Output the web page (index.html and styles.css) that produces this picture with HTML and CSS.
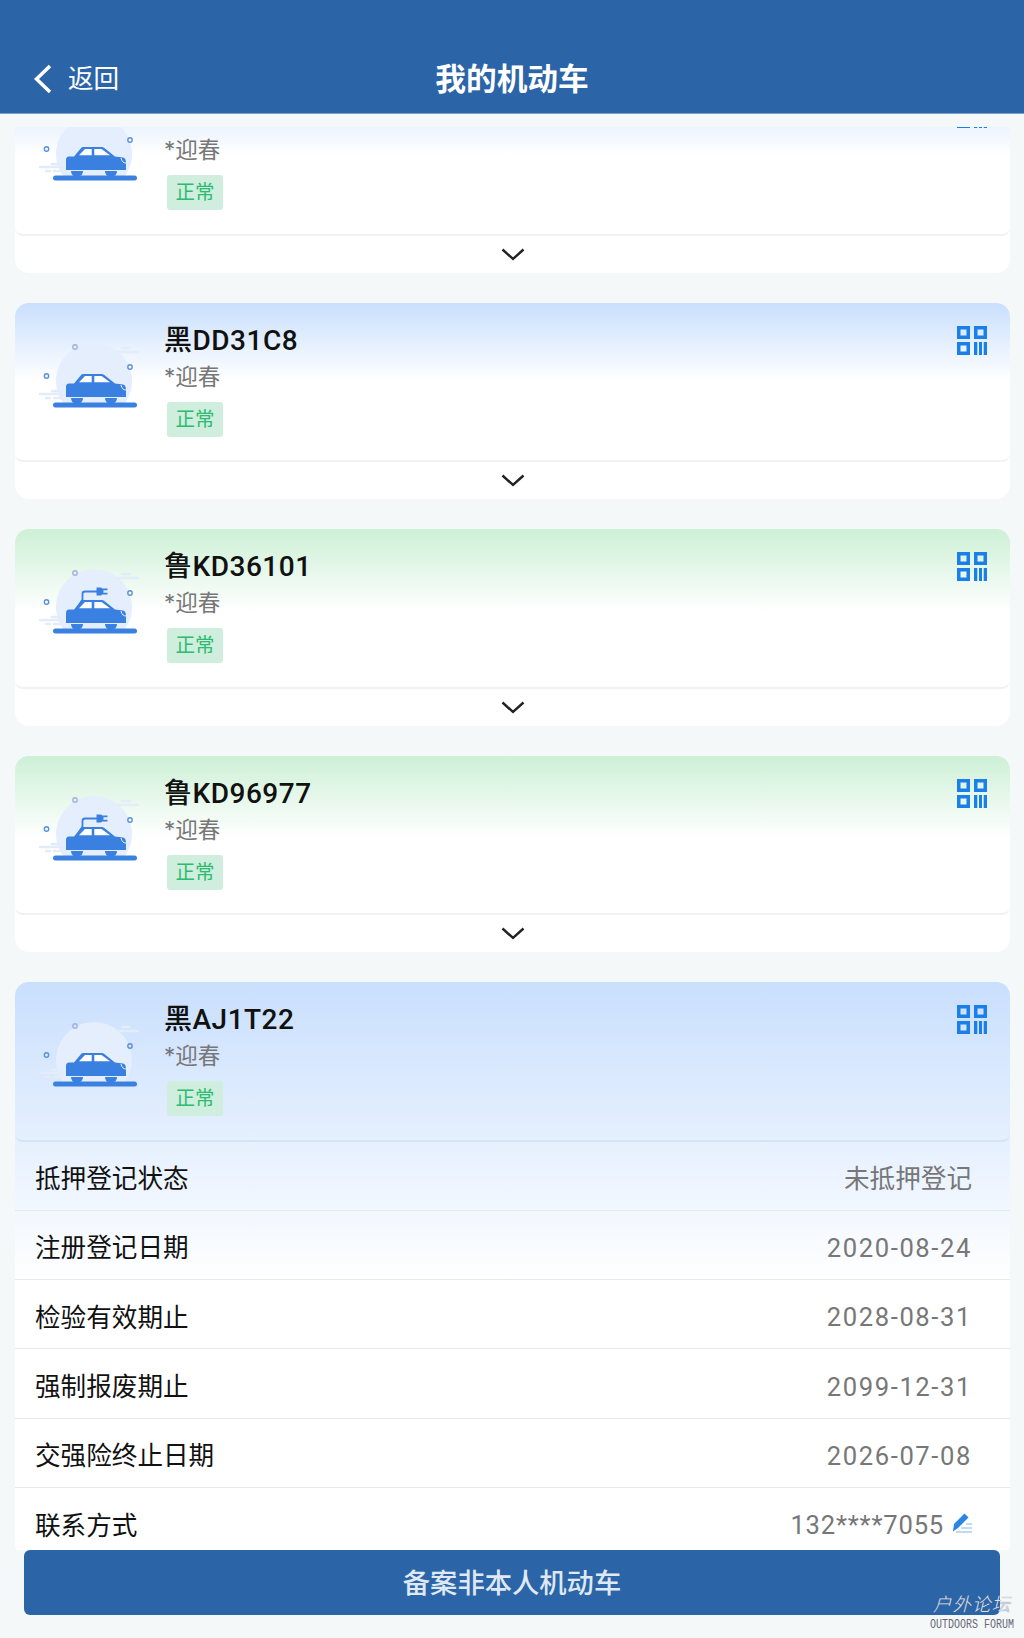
FILE: index.html
```html
<!DOCTYPE html>
<html lang="zh-CN">
<head>
    <meta charset="UTF-8">
    <title>我的机动车</title>
    <link rel="stylesheet" href="styles.css">
</head>
<body>
    <svg class="defs" width="0" height="0">
        <defs>
            <g id="car-base">
                <path class="car-glow" d="M25 63A38 38 0 1 1 87 63Z"/>
                <circle class="car-dot-light" cx="37" cy="7" r="2.200"/>
                <circle class="car-dot" cx="92" cy="27" r="2.200"/>
                <circle class="car-dot" cx="8.500" cy="36" r="2.200"/>
                <path class="car-speed" d="M2 54H24M14 51H22M8 58H12M16 58H24M80 12H100M84 8H92"/>
                <path class="car-body" d="M28 47Q28 43.500 31 43.500H36L43.500 34.500Q44 34 45 34H64Q65 34 66 34.800L77 43.500L85 44.500Q88 45 88 50V57H28Z"/>
                <path class="car-window" d="M41 42.300L47 36H53.700V42.300ZM56.300 36H63.500L72 42.300H56.300Z"/>
                <path class="car-body" d="M33 58H45Q45 63.500 39 63.500Q33 63.500 33 58ZM67 58H79Q79 63.500 73 63.500Q67 63.500 67 58Z"/>
                <path class="car-light" d="M83 45Q84 50 88 50"/>
                <rect class="car-body" x="15" y="62.500" width="84" height="5" rx="2.500"/>
            </g>
            <g id="car-plug">
                <path class="plug-wire" d="M39 42L44.500 33.500V28Q44.500 25.500 47 25.500H59"/>
                <path class="car-body" d="M58.500 21.500H62Q65.500 21.500 65.500 25.500Q65.500 29.500 62 29.500H58.500Z"/>
                <path class="plug-wire" d="M65 23.300H69.500M65 27.600H69.500"/>
            </g>
            <g id="qr">
                <path d="M0 0H13V13H0ZM3.500 3.500V9.500H9.500V3.500ZM17 0H30V13H17ZM20.500 3.500V9.500H26.500V3.500ZM0 16H13V29H0ZM3.500 19.500V25.500H9.500V19.500Z" fill-rule="evenodd"/>
                <path d="M17 16H20.300V29H17ZM22 16H25V29H22ZM26.700 16H30V29H26.700Z"/>
            </g>
            <path id="chevron" d="M1.500 1.500L12 11L22.500 1.500"/>
        </defs>
    </svg>

    <header class="topbar">
        <div class="back">
            <svg class="back-icon" width="19" height="30" viewBox="0 0 19 30"><path d="M17 2L3.500 15L17 28"/></svg>
            <span>返回</span>
        </div>
        <h1>我的机动车</h1>
    </header>

    <main class="scroller">
        <div class="list">
            <section class="card card-blue">
                <div class="card-head">
                    <svg class="car" width="104" height="76" viewBox="0 0 104 76"><use href="#car-base"/></svg>
                    <div class="info">
                        <div class="plate"></div>
                        <div class="owner">*迎春</div>
                        <span class="tag">正常</span>
                    </div>
                    <svg class="qr" width="30" height="29" viewBox="0 0 30 29"><use href="#qr"/></svg>
                </div>
                <div class="card-foot"><svg class="chevron" width="24" height="13" viewBox="0 0 24 13"><use href="#chevron"/></svg></div>
            </section>

            <section class="card card-blue">
                <div class="card-head">
                    <svg class="car" width="104" height="76" viewBox="0 0 104 76"><use href="#car-base"/></svg>
                    <div class="info">
                        <div class="plate">黑DD31C8</div>
                        <div class="owner">*迎春</div>
                        <span class="tag">正常</span>
                    </div>
                    <svg class="qr" width="30" height="29" viewBox="0 0 30 29"><use href="#qr"/></svg>
                </div>
                <div class="card-foot"><svg class="chevron" width="24" height="13" viewBox="0 0 24 13"><use href="#chevron"/></svg></div>
            </section>

            <section class="card card-green">
                <div class="card-head">
                    <svg class="car" width="104" height="76" viewBox="0 0 104 76"><use href="#car-base"/><use href="#car-plug"/></svg>
                    <div class="info">
                        <div class="plate">鲁KD36101</div>
                        <div class="owner">*迎春</div>
                        <span class="tag">正常</span>
                    </div>
                    <svg class="qr" width="30" height="29" viewBox="0 0 30 29"><use href="#qr"/></svg>
                </div>
                <div class="card-foot"><svg class="chevron" width="24" height="13" viewBox="0 0 24 13"><use href="#chevron"/></svg></div>
            </section>

            <section class="card card-green">
                <div class="card-head">
                    <svg class="car" width="104" height="76" viewBox="0 0 104 76"><use href="#car-base"/><use href="#car-plug"/></svg>
                    <div class="info">
                        <div class="plate">鲁KD96977</div>
                        <div class="owner">*迎春</div>
                        <span class="tag">正常</span>
                    </div>
                    <svg class="qr" width="30" height="29" viewBox="0 0 30 29"><use href="#qr"/></svg>
                </div>
                <div class="card-foot"><svg class="chevron" width="24" height="13" viewBox="0 0 24 13"><use href="#chevron"/></svg></div>
            </section>

            <section class="card card-open">
                <div class="card-head">
                    <svg class="car" width="104" height="76" viewBox="0 0 104 76"><use href="#car-base"/></svg>
                    <div class="info">
                        <div class="plate">黑AJ1T22</div>
                        <div class="owner">*迎春</div>
                        <span class="tag">正常</span>
                    </div>
                    <svg class="qr" width="30" height="29" viewBox="0 0 30 29"><use href="#qr"/></svg>
                </div>
                <div class="row"><span>抵押登记状态</span><span class="value">未抵押登记</span></div>
                <div class="row"><span>注册登记日期</span><span class="value date">2020-08-24</span></div>
                <div class="row"><span>检验有效期止</span><span class="value date">2028-08-31</span></div>
                <div class="row"><span>强制报废期止</span><span class="value date">2099-12-31</span></div>
                <div class="row"><span>交强险终止日期</span><span class="value date">2026-07-08</span></div>
                <div class="row">
                    <span>联系方式</span>
                    <span class="value phone">132****7055
                        <svg class="edit" width="20" height="20" viewBox="0 0 20 20">
                            <path class="edit-pen" d="M12.500 0.500L16.500 4.500L6 15L1 18.500L2 11Z"/>
                            <path class="edit-lines" d="M14 11H20M9 15H20M4 19H20"/>
                        </svg>
                    </span>
                </div>
            </section>
        </div>
    </main>

    <footer class="actions">
        <button class="primary">备案非本人机动车</button>
        <div class="watermark">
            <div class="watermark-cn">户外论坛</div>
            <div class="watermark-en">OUTDOORS FORUM</div>
        </div>
    </footer>
</body>
</html>
```
FILE: styles.css
```css
* {
    box-sizing: border-box;
}
html, body {
    height: 100%;
}
body {
    margin: 0;
    display: flex;
    flex-direction: column;
    background: #f5f8f9;
    color: #111;
    font-family: Inter, "Noto Sans CJK SC", sans-serif;
    font-size: 25.6px;
}
.defs {
    position: absolute;
}

/* top bar */
.topbar {
    flex: none;
    height: 114px;
    padding-top: 58px;
    position: relative;
    background: #2b65a8;
    border-bottom: 1px solid #7ea0c8;
    color: #fff;
    text-align: center;
}
.topbar h1 {
    margin: 0;
    font-size: 30.7px;
    font-weight: 700;
    line-height: 42px;
}
.back {
    position: absolute;
    left: 33px;
    top: 60px;
    display: flex;
    align-items: center;
    gap: 16px;
    line-height: 38px;
}
.back-icon path {
    fill: none;
    stroke: #fff;
    stroke-width: 3.500;
}

/* list */
.scroller {
    flex: 1;
    min-height: 0;
    margin-top: 13px;
    overflow: hidden;
}
.list {
    display: flex;
    flex-direction: column;
    gap: 30px;
    margin-top: -51px;
    padding: 0 14px 0 15px;
}
.card {
    position: relative;
    background: #fff;
    border-radius: 14px;
    overflow: hidden;
}
.card-blue {
    background: linear-gradient(#c9dffd, #fff 40%);
}
.card-green {
    background: linear-gradient(#cdf0d6, #fff 42%);
}
.card-open {
    background: linear-gradient(#c9dffd, #fff 300px);
}
.card-head {
    display: flex;
    align-items: flex-start;
    height: 159.500px;
    padding: 19px 23px 0 23px;
    border-bottom: 2px solid rgba(40, 60, 90, 0.07);
    border-radius: 0 0 8px 8px;
}
.car {
    flex: none;
    margin-top: 18px;
    margin-right: 22px;
}
.info {
    flex: 1;
}
.plate {
    height: 36px;
    font-family: Roboto, "Noto Sans CJK SC", sans-serif;
    font-size: 28px;
    font-weight: 500;
    letter-spacing: 0.500px;
    line-height: 38px;
}
.owner {
    margin-top: 1px;
    color: #777;
    font-size: 22.500px;
    line-height: 36px;
}
.tag {
    display: block;
    width: 56px;
    height: 35px;
    margin: 7px 0 0 3px;
    background: #cfeedd;
    border-radius: 3px;
    color: #2dbb72;
    font-size: 19.500px;
    line-height: 35px;
    text-align: center;
}
.qr {
    flex: none;
    margin-top: 4px;
    fill: #1a7fe8;
}
.card-foot {
    display: flex;
    align-items: center;
    justify-content: center;
    height: 37px;
}
.chevron {
    fill: none;
    stroke: #222;
    stroke-width: 2.400;
}

/* car illustration */
.car-glow {
    fill: #e5eefc;
}
.car-dot {
    fill: none;
    stroke: #5b92d8;
    stroke-width: 1.400;
}
.car-dot-light {
    fill: none;
    stroke: #a3afe4;
    stroke-width: 1.400;
}
.car-speed {
    fill: none;
    stroke: #e3ecf9;
    stroke-width: 2.500;
    stroke-linecap: round;
}
.car-body {
    fill: #3a80e0;
}
.car-window {
    fill: #fff;
}
.car-light {
    fill: none;
    stroke: #e8f0fc;
    stroke-width: 1;
}
.plug-wire {
    fill: none;
    stroke: #3a80e0;
    stroke-width: 1.800;
}

/* detail rows */
.row {
    display: flex;
    align-items: center;
    justify-content: space-between;
    height: 69.300px;
    padding: 2px 38px 0 20px;
    border-bottom: 1px solid #e6e8ea;
}
.value {
    display: flex;
    align-items: center;
    gap: 8px;
    color: #777;
}
.date {
    padding-top: 4px;
    font-family: Roboto, sans-serif;
    letter-spacing: 1.600px;
}
.phone {
    padding-top: 4px;
    font-family: Roboto, sans-serif;
    letter-spacing: 0.800px;
}
.edit {
    margin-top: -4px;
}
.edit-pen {
    fill: #2a86e6;
}
.edit-lines {
    fill: none;
    stroke: #7fb6ee;
    stroke-width: 1.200;
}

/* bottom action */
.actions {
    flex: none;
    position: relative;
    height: 88px;
    padding: 0 24px;
}
.primary {
    display: block;
    width: 100%;
    height: 65px;
    padding: 0 0 4px;
    background: #2b65a8;
    border: none;
    border-radius: 6px;
    color: #dfe8f3;
    font-family: inherit;
    font-size: 27.300px;
    font-weight: 500;
}
.watermark {
    position: absolute;
    right: 8px;
    top: 42px;
    width: 88px;
    text-align: center;
}
.watermark-cn {
    color: #d5e0ee;
    font-size: 18.500px;
    font-style: italic;
    font-weight: 300;
    line-height: 24px;
    letter-spacing: 1px;
    white-space: nowrap;
    text-shadow: 0 0 1px #667;
}
.watermark-en {
    margin-top: 4px;
    color: #667;
    font-family: "Liberation Mono", monospace;
    font-size: 10px;
    line-height: 10px;
    white-space: nowrap;
    transform: scaleY(1.300);
}
```
